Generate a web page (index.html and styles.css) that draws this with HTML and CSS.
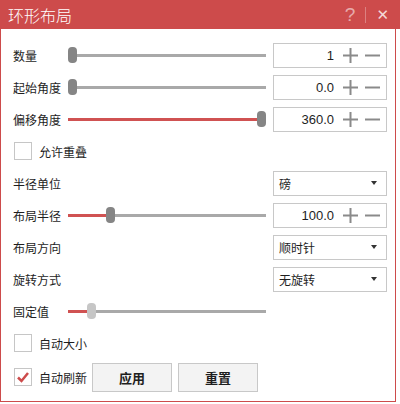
FILE: index.html
```html
<!DOCTYPE html>
<html lang="zh-Hans">
<head>
  <meta charset="UTF-8" />
  <meta name="viewport" content="width=device-width, initial-scale=1.0" />
  <title>环形布局</title>
  <link rel="stylesheet" href="styles.css">
</head>
<body>
  <header class="titlebar">
    <span class="title">环形布局</span>
    <span class="help">?</span>
    <span class="sep"></span>
    <span class="close">✕</span>
  </header>

  <main class="panel">
    <div class="row">
      <span class="label">数量</span>
      <div class="slider"><div class="fill" style="width:0px"></div><div class="thumb"></div><div class="rest"></div></div>
      <div class="box spin">
        <span class="num">1</span>
        <svg class="pm" width="15" height="15" viewBox="0 0 15 15"><path d="M0 7.5H15M7.5 0V15" /></svg>
        <svg class="pm" width="15" height="15" viewBox="0 0 15 15"><path d="M0 7.5H15" /></svg>
      </div>
    </div>

    <div class="row">
      <span class="label">起始角度</span>
      <div class="slider"><div class="fill" style="width:0px"></div><div class="thumb"></div><div class="rest"></div></div>
      <div class="box spin">
        <span class="num">0.0</span>
        <svg class="pm" width="15" height="15" viewBox="0 0 15 15"><path d="M0 7.5H15M7.5 0V15" /></svg>
        <svg class="pm" width="15" height="15" viewBox="0 0 15 15"><path d="M0 7.5H15" /></svg>
      </div>
    </div>

    <div class="row">
      <span class="label">偏移角度</span>
      <div class="slider"><div class="fill" style="width:189px"></div><div class="thumb"></div><div class="rest"></div></div>
      <div class="box spin">
        <span class="num">360.0</span>
        <svg class="pm" width="15" height="15" viewBox="0 0 15 15"><path d="M0 7.5H15M7.5 0V15" /></svg>
        <svg class="pm" width="15" height="15" viewBox="0 0 15 15"><path d="M0 7.5H15" /></svg>
      </div>
    </div>

    <div class="row">
      <span class="check"></span>
      <span class="check-label">允许重叠</span>
    </div>

    <div class="row">
      <span class="label wide">半径单位</span>
      <div class="box select"><span>磅</span><span class="arrow"></span></div>
    </div>

    <div class="row">
      <span class="label">布局半径</span>
      <div class="slider"><div class="fill" style="width:38px"></div><div class="thumb"></div><div class="rest"></div></div>
      <div class="box spin">
        <span class="num">100.0</span>
        <svg class="pm" width="15" height="15" viewBox="0 0 15 15"><path d="M0 7.5H15M7.5 0V15" /></svg>
        <svg class="pm" width="15" height="15" viewBox="0 0 15 15"><path d="M0 7.5H15" /></svg>
      </div>
    </div>

    <div class="row">
      <span class="label wide">布局方向</span>
      <div class="box select"><span>顺时针</span><span class="arrow"></span></div>
    </div>

    <div class="row">
      <span class="label wide">旋转方式</span>
      <div class="box select"><span>无旋转</span><span class="arrow"></span></div>
    </div>

    <div class="row">
      <span class="label">固定值</span>
      <div class="slider"><div class="fill" style="width:19px"></div><div class="thumb off"></div><div class="rest"></div></div>
    </div>

    <div class="row">
      <span class="check"></span>
      <span class="check-label">自动大小</span>
    </div>

    <div class="row last">
      <span class="check">
        <svg width="16" height="16" viewBox="0 0 16 16"><path d="M3 8.5L6.5 12L13 4" /></svg>
      </span>
      <span class="check-label fixed">自动刷新</span>
      <button class="btn">应用</button>
      <button class="btn">重置</button>
    </div>
  </main>
</body>
</html>
```

FILE: styles.css
```css
body {
  margin: 0;
  background: #fff;
  font-family: "Noto Sans CJK SC", "Liberation Sans", sans-serif;
  font-size: 12px;
  color: #1e1e1e;
}
.titlebar {
  height: 29px;
  background: #cd4b4b;
  color: #fff;
  display: flex;
  align-items: center;
  padding-left: 8px;
}
.title {
  font-size: 16px;
  font-weight: 300;
  flex: 1;
}
.help {
  font-family: "Liberation Sans", sans-serif;
  font-size: 19px;
  color: rgba(255,255,255,0.55);
}
.sep {
  width: 1px;
  height: 16px;
  background: rgba(255,255,255,0.3);
  margin: 0 10px 0 10px;
}
.close {
  font-family: "DejaVu Sans", sans-serif;
  font-size: 15px;
  font-weight: bold;
  color: rgba(255,255,255,0.8);
  margin-right: 11px;
}
.panel {
  width: 396px;
  height: 373px;
  box-sizing: border-box;
  border: 1px solid #cd4b4b;
  border-top: none;
  padding: 10px 8px 0 12px;
}
.row {
  display: flex;
  align-items: center;
  height: 32px;
}
.row.last {
  margin-top: 2px;
}
.label {
  width: 55px;
}
.label.wide {
  width: 260px;
}
.slider {
  width: 198px;
  margin-right: 7px;
  display: flex;
  align-items: center;
}
.fill {
  height: 3px;
  background: #d05252;
}
.rest {
  flex: 1;
  height: 3px;
  background: #a9a9a9;
}
.thumb {
  width: 9px;
  height: 16px;
  border-radius: 4px;
  background: #858585;
}
.thumb.off {
  background: #c6c6c6;
}
.box {
  width: 114px;
  height: 25px;
  box-sizing: border-box;
  border: 1px solid #c8c8c8;
  display: flex;
  align-items: center;
}
.spin {
  padding-right: 6px;
}
.num {
  flex: 1;
  text-align: right;
  margin-right: 9px;
  font-family: "Liberation Sans", sans-serif;
  font-size: 13px;
}
.pm {
  stroke: #8a8a8a;
  stroke-width: 2;
  fill: none;
}
.pm + .pm {
  margin-left: 7px;
}
.select {
  padding: 0 9px 0 5px;
  justify-content: space-between;
}
.arrow {
  width: 0;
  height: 0;
  border-left: 3px solid transparent;
  border-right: 3px solid transparent;
  border-top: 4px solid #333;
}
.check {
  width: 18px;
  height: 18px;
  box-sizing: border-box;
  border: 1px solid #c6c6c6;
  margin: 0 7px 0 1px;
  display: flex;
  align-items: center;
  justify-content: center;
}
.check svg {
  stroke: #cd4b4b;
  stroke-width: 2.5;
  fill: none;
}
.check-label.fixed {
  width: 53px;
}
.btn {
  width: 80px;
  height: 29px;
  margin-right: 6px;
  background: #f3f3f3;
  border: 1px solid #c8c8c8;
  font-family: "Noto Sans CJK SC", sans-serif;
  font-size: 13px;
  font-weight: bold;
  color: #1e1e1e;
  padding: 0;
}
```
